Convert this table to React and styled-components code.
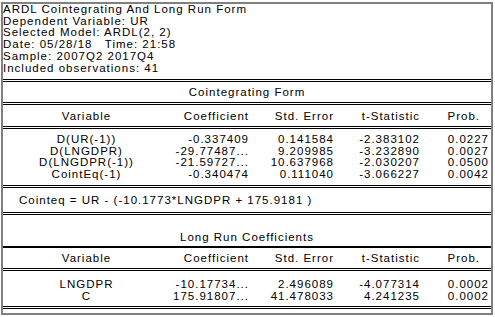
import styled, { createGlobalStyle } from "styled-components";

const GlobalStyle = createGlobalStyle`
  body {
    margin: 0;
    background: #fff;
    font-family: "Liberation Sans", Arial, sans-serif;
    font-size: 11.5px;
    line-height: 11.7px;
    letter-spacing: 1px;
    color: #000;
  }
`;

const header = [
  "ARDL Cointegrating And Long Run Form",
  "Dependent Variable: UR",
  "Selected Model: ARDL(2, 2)",
  "Date: 05/28/18   Time: 21:58",
  "Sample: 2007Q2 2017Q4",
  "Included observations: 41",
];

const columns = ["Variable", "Coefficient", "Std. Error", "t-Statistic", "Prob."];

const shortRun = [
  ["D(UR(-1))", "-0.337409", "0.141584", "-2.383102", "0.0227"],
  ["D(LNGDPR)", "-29.77487...", "9.209985", "-3.232890", "0.0027"],
  ["D(LNGDPR(-1))", "-21.59727...", "10.637968", "-2.030207", "0.0500"],
  ["CointEq(-1)", "-0.340474", "0.111040", "-3.066227", "0.0042"],
];

const longRun = [
  ["LNGDPR", "-10.17734...", "2.496089", "-4.077314", "0.0002"],
  ["C", "175.91807...", "41.478033", "4.241235", "0.0002"],
];

const TableRows = ({ rows }) =>
  rows.map((r) => (
    <Row key={r[0]}>
      {r.map((v, i) => (
        <Cell key={i} $col={i}>
          {v}
        </Cell>
      ))}
    </Row>
  ));

const HeadRow = () => (
  <Row>
    {columns.map((c, i) => (
      <Cell key={c} $col={i} $head>
        {c}
      </Cell>
    ))}
  </Row>
);

const App = () => {
  return (
    <Page>
      <GlobalStyle />
      <Frame>
        <Info>
          {header.map((l) => (
            <InfoLine key={l}>{l}</InfoLine>
          ))}
        </Info>
        <Rule />
        <Title $top={5} $bottom={3.3}>
          Cointegrating Form
        </Title>
        <Rule />
        <Block $top={6} $bottom={3.3}>
          <HeadRow />
        </Block>
        <Rule />
        <Block $top={4.6} $bottom={4.7}>
          <TableRows rows={shortRun} />
        </Block>
        <Rule />
        <Note>Cointeq = UR - (-10.1773*LNGDPR + 175.9181 )</Note>
        <Rule />
        <Title $top={17} $bottom={2.7}>
          Long Run Coefficients
        </Title>
        <Rule $thick />
        <Block $top={4.6} $bottom={3.7}>
          <HeadRow />
        </Block>
        <Rule />
        <Block $top={7.5} $bottom={4}>
          <TableRows rows={longRun} />
        </Block>
        <Rule />
        <Bottom />
      </Frame>
    </Page>
  );
};
export default App;

const Page = styled.div`
  padding: 2px 0 0 1px;
`;

const Frame = styled.div`
  width: 492px;
  box-sizing: border-box;
  border: 2px solid #808080;
  background: #fff;
`;

const Info = styled.div`
  padding: 0 0 5px 0;
`;

const InfoLine = styled.div`
  white-space: pre;
`;

const Rule = styled.div`
  border-top: ${(p) => (p.$thick ? "2px solid #000" : "3px double #000")};
`;

const Title = styled.div`
  text-align: center;
  padding: ${(p) => p.$top}px 0 ${(p) => p.$bottom}px;
`;

const Block = styled.div`
  padding: ${(p) => p.$top}px 0 ${(p) => p.$bottom}px;
`;

const Row = styled.div`
  display: grid;
  grid-template-columns: 167px 79px 85px 86px 1fr;
`;

const Cell = styled.div`
  white-space: nowrap;
  text-align: ${(p) => (p.$col === 0 ? "center" : "right")};
  padding-right: ${(p) => (p.$col === 4 ? (p.$head ? 11 : 2) : 0)}px;
`;

const Note = styled.div`
  padding: 6.5px 0 5.5px 16px;
`;

const Bottom = styled.div`
  height: 4px;
`;
